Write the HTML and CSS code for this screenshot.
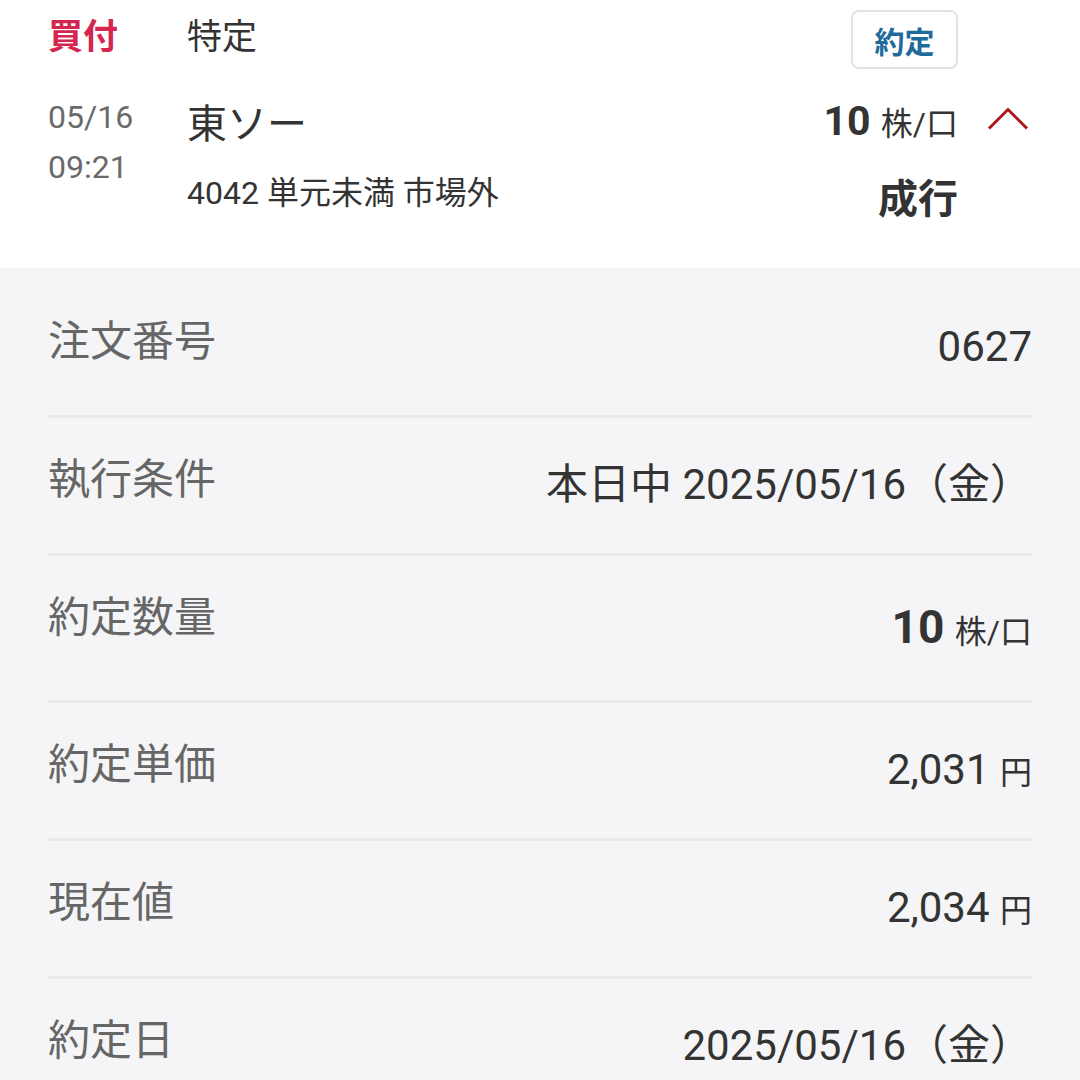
FILE: index.html
```html
<!DOCTYPE html>
<html lang="ja">
<head>
    <meta charset="UTF-8">
    <meta name="viewport" content="width=device-width, initial-scale=1.0">
    <title>約定照会</title>
    <link rel="stylesheet" href="styles.css">
</head>
<body>
    <div class="order-head">
        <div class="side">買付</div>
        <div class="account">特定</div>
        <div class="badge">約定</div>
        <div></div>

        <div class="dates">
            <div>05/16</div>
            <div>09:21</div>
        </div>
        <div class="stock">
            <div class="stock-name">東ソー</div>
            <div class="stock-code">4042 単元未満 市場外</div>
        </div>
        <div class="order-qty">
            <div class="qty-line"><span class="num">10</span> <span class="unit">株/口</span></div>
            <div class="order-type">成行</div>
        </div>
        <div class="toggle">
            <svg width="42" height="24" viewBox="0 0 42 24">
                <polyline points="2,22.5 21,3.5 40,22.5" fill="none" stroke="#a8191e" stroke-width="3"/>
            </svg>
        </div>
    </div>

    <div class="detail">
        <div class="detail-row">
            <div class="label">注文番号</div>
            <div class="value">0627</div>
        </div>
        <div class="detail-row">
            <div class="label">執行条件</div>
            <div class="value">本日中 2025/05/16（金）</div>
        </div>
        <div class="detail-row">
            <div class="label">約定数量</div>
            <div class="value"><span class="num-big">10</span> <span class="unit">株/口</span></div>
        </div>
        <div class="detail-row">
            <div class="label">約定単価</div>
            <div class="value">2,031 <span class="unit">円</span></div>
        </div>
        <div class="detail-row">
            <div class="label">現在値</div>
            <div class="value">2,034 <span class="unit">円</span></div>
        </div>
        <div class="detail-row">
            <div class="label">約定日</div>
            <div class="value">2025/05/16（金）</div>
        </div>
    </div>
</body>
</html>
```

FILE: styles.css
```css
body {
    font-family: Roboto, "Noto Sans CJK JP", sans-serif;
    background-color: #f5f5f7;
    color: #333;
    margin: 0;
}

.order-head {
    display: grid;
    grid-template-columns: 139px 1fr auto 72px;
    grid-template-rows: 60px auto;
    row-gap: 22px;
    align-content: start;
    height: 268px;
    box-sizing: border-box;
    padding: 10px 50px 0 48px;
    background-color: #fff;
}

.side,
.account {
    font-size: 35px;
    line-height: 50px;
    margin-top: 3px;
}

.side {
    color: #d4264f;
    font-weight: bold;
}

.badge {
    justify-self: end;
    width: 107px;
    height: 59px;
    box-sizing: border-box;
    border: 2px solid #e3e3e3;
    border-radius: 8px;
    display: flex;
    align-items: center;
    justify-content: center;
    font-size: 30px;
    font-weight: bold;
    color: #1f6b9c;
}

.dates {
    font-size: 32px;
    line-height: 50px;
    color: #6a6a6a;
}

.stock-name {
    font-size: 40px;
    line-height: 50px;
    margin-top: 8px;
}

.stock-code {
    font-size: 32px;
    line-height: 50px;
    margin-top: 18px;
}

.order-qty {
    text-align: right;
}

.qty-line {
    font-size: 41px;
    line-height: 50px;
    margin-top: 4px;
}

.qty-line .num {
    font-weight: bold;
}

.unit {
    font-size: 32px;
    line-height: 1;
}

.order-type {
    font-size: 40px;
    font-weight: bold;
    line-height: 50px;
    margin-top: 29px;
}

.toggle {
    justify-self: end;
    margin-top: 14px;
    margin-right: 1px;
}

.toggle svg {
    display: block;
}

.detail {
    padding: 12px 48px 0;
}

.detail-row {
    display: flex;
    justify-content: space-between;
    align-items: flex-start;
    padding: 34px 0 35px;
    border-bottom: 3px solid #e9e9eb;
}

.label {
    font-size: 42px;
    line-height: 56px;
    color: #666;
}

.value {
    font-size: 42px;
    line-height: 66px;
    color: #333;
}

.num-big {
    font-size: 46px;
    font-weight: bold;
    line-height: 75px;
}
```
